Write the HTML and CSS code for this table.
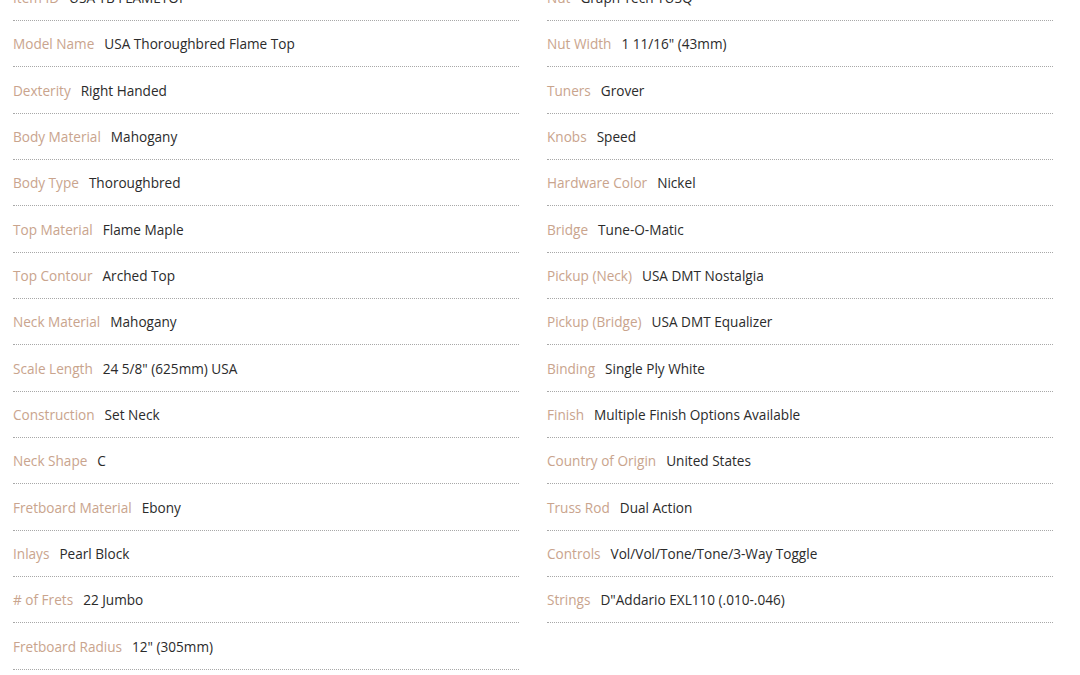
FILE: index.html
```html
<!DOCTYPE html>
<html>
<head>
<meta charset="utf-8">
<link rel="stylesheet" href="styles.css">
</head>
<body>
<div class="specs">
  <ul class="col">
    <li class="row"><span class="label">Item ID</span><span class="value">USA TB FLAMETOP</span></li>
    <li class="row"><span class="label">Model Name</span><span class="value">USA Thoroughbred Flame Top</span></li>
    <li class="row"><span class="label">Dexterity</span><span class="value">Right Handed</span></li>
    <li class="row"><span class="label">Body Material</span><span class="value">Mahogany</span></li>
    <li class="row"><span class="label">Body Type</span><span class="value">Thoroughbred</span></li>
    <li class="row"><span class="label">Top Material</span><span class="value">Flame Maple</span></li>
    <li class="row"><span class="label">Top Contour</span><span class="value">Arched Top</span></li>
    <li class="row"><span class="label">Neck Material</span><span class="value">Mahogany</span></li>
    <li class="row"><span class="label">Scale Length</span><span class="value">24 5/8" (625mm) USA</span></li>
    <li class="row"><span class="label">Construction</span><span class="value">Set Neck</span></li>
    <li class="row"><span class="label">Neck Shape</span><span class="value">C</span></li>
    <li class="row"><span class="label">Fretboard Material</span><span class="value">Ebony</span></li>
    <li class="row"><span class="label">Inlays</span><span class="value">Pearl Block</span></li>
    <li class="row"><span class="label"># of Frets</span><span class="value">22 Jumbo</span></li>
    <li class="row"><span class="label">Fretboard Radius</span><span class="value">12" (305mm)</span></li>
  </ul>
  <ul class="col">
    <li class="row"><span class="label">Nut</span><span class="value">Graph Tech TUSQ</span></li>
    <li class="row"><span class="label">Nut Width</span><span class="value">1 11/16" (43mm)</span></li>
    <li class="row"><span class="label">Tuners</span><span class="value">Grover</span></li>
    <li class="row"><span class="label">Knobs</span><span class="value">Speed</span></li>
    <li class="row"><span class="label">Hardware Color</span><span class="value">Nickel</span></li>
    <li class="row"><span class="label">Bridge</span><span class="value">Tune-O-Matic</span></li>
    <li class="row"><span class="label">Pickup (Neck)</span><span class="value">USA DMT Nostalgia</span></li>
    <li class="row"><span class="label">Pickup (Bridge)</span><span class="value">USA DMT Equalizer</span></li>
    <li class="row"><span class="label">Binding</span><span class="value">Single Ply White</span></li>
    <li class="row"><span class="label">Finish</span><span class="value">Multiple Finish Options Available</span></li>
    <li class="row"><span class="label">Country of Origin</span><span class="value">United States</span></li>
    <li class="row"><span class="label">Truss Rod</span><span class="value">Dual Action</span></li>
    <li class="row"><span class="label">Controls</span><span class="value">Vol/Vol/Tone/Tone/3-Way Toggle</span></li>
    <li class="row"><span class="label">Strings</span><span class="value">D"Addario EXL110 (.010-.046)</span></li>
  </ul>
</div>
</body>
</html>
```
FILE: styles.css
```css
html, body {
  margin: 0;
  padding: 0;
  background: #fff;
}
body {
  font-family: "Open Sans", "Noto Sans", sans-serif;
  font-size: 13.6px;
  overflow: hidden;
}
.specs {
  display: grid;
  grid-template-columns: 506px 506px;
  column-gap: 28px;
  padding-left: 13px;
  margin-top: -25.36px;
  align-items: start;
}
.col {
  list-style: none;
  margin: 0;
  padding: 0;
}
.row {
  display: flex;
  align-items: baseline;
  gap: 10px;
  padding: 12.18px 0;
  line-height: 21px;
  border-bottom: 1px dotted #a8a8a8;
}
.label {
  color: #c9a48d;
}
.value {
  color: #2b2b2b;
}
```
